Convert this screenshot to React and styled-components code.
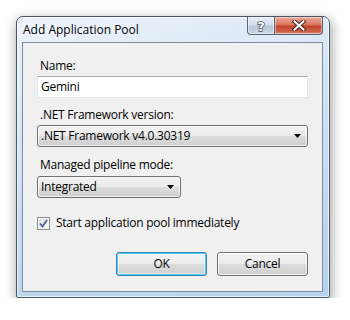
import React from "react";
import styled, { createGlobalStyle } from "styled-components";

const Global = createGlobalStyle`
  html, body { margin: 0; padding: 0; background: #ffffff; }
  body { font-family: "Open Sans", "Noto Sans", sans-serif; font-size: 12px; letter-spacing: -0.25px; color: #000; }
`;

const Page = styled.div`
  padding: 16px 0 0 16px;
`;

const Window = styled.div`
  width: 314px;
  height: 282px;
  box-sizing: border-box;
  border: 1px solid #4a5666;
  border-radius: 7px 7px 2px 2px;
  background: linear-gradient(165deg, #eef4fb 0%, #d6e5f5 35%, #c3d8ef 70%, #b8d1ec 100%);
  box-shadow: 1px 4px 12px 1px rgba(0, 0, 0, 0.35), inset 0 0 0 1px rgba(255, 255, 255, 0.65);
  display: flex;
  flex-direction: column;
  padding: 0 6px 5px 5px;
`;

const TitleBar = styled.div`
  height: 25px;
  display: flex;
  align-items: flex-start;
`;

const Title = styled.div`
  font-size: 12px;
  letter-spacing: 0;
  line-height: 16px;
  margin: 5px 0 0 1px;
  color: #000;
  text-shadow: 0 0 6px rgba(255, 255, 255, 0.9);
`;

const Controls = styled.div`
  margin-left: auto;
  display: flex;
`;

const CapButton = styled.div`
  width: ${(p) => p.$w}px;
  height: 18px;
  box-sizing: border-box;
  border: 1px solid #5a6470;
  border-top: none;
  border-left: ${(p) => (p.$first ? "1px solid #5a6470" : "none")};
  border-radius: ${(p) => (p.$first ? "0 0 0 4px" : "0 0 4px 0")};
  background: ${(p) =>
    p.$close
      ? "linear-gradient(to bottom, #e9a99b 0%, #d9745f 45%, #c2442b 55%, #d06048 85%, #e0937f 100%)"
      : "linear-gradient(to bottom, #e6edf6 0%, #d3dfec 45%, #b9c8da 55%, #c9d6e5 100%)"};
  box-shadow: inset 0 0 0 1px rgba(255, 255, 255, 0.45);
  display: flex;
  align-items: center;
  justify-content: center;
`;

const Client = styled.div`
  flex: 1;
  border: 1px solid #7a8ea6;
  background: #f0f0f0;
  display: flex;
  flex-direction: column;
  padding: 15px 14px 0 14px;
`;

const Label = styled.div`
  line-height: 16px;
  padding-left: 3px;
  margin-top: ${(p) => p.$mt || 0}px;
  margin-bottom: ${(p) => p.$mb || 2}px;
`;

const TextBox = styled.div`
  height: 22px;
  box-sizing: border-box;
  border: 1px solid #dfe6ee;
  border-top-color: #abadb3;
  background: #ffffff;
  padding: 0 3px;
  line-height: 20px;
`;

const Combo = styled.div`
  width: ${(p) => p.$w}px;
  height: 22px;
  box-sizing: border-box;
  border: 1px solid #707070;
  border-radius: 3px;
  background: linear-gradient(to bottom, #f2f2f2 0%, #ebebeb 50%, #dddddd 50%, #cfcfcf 100%);
  box-shadow: inset 0 0 0 1px rgba(255, 255, 255, 0.7);
  display: flex;
  align-items: center;
  padding: 0 6px 0 3px;
  line-height: 20px;
`;

const ComboText = styled.span`
  flex: 1;
`;

const CheckRow = styled.div`
  margin-top: 17px;
  display: flex;
  align-items: center;
  gap: 6px;
  line-height: 16px;
`;

const CheckBox = styled.div`
  width: 13px;
  height: 13px;
  box-sizing: border-box;
  border: 1px solid #8e8f8f;
  background: linear-gradient(135deg, #dcdcdc 0%, #f4f4f4 70%, #ffffff 100%);
  box-shadow: inset 0 0 0 1px #f4f4f4;
  display: flex;
  align-items: center;
  justify-content: center;
`;

const ButtonRow = styled.div`
  margin-top: 21px;
  display: flex;
  justify-content: flex-end;
  gap: 10px;
`;

const Button = styled.div`
  width: 91px;
  height: 24px;
  box-sizing: border-box;
  border: 1px solid ${(p) => (p.$default ? "#3c7fb1" : "#707070")};
  border-radius: 3px;
  background: linear-gradient(to bottom, #f2f2f2 0%, #ebebeb 50%, #dddddd 50%, #cfcfcf 100%);
  box-shadow: ${(p) =>
    p.$default ? "inset 0 0 0 1px #48d0fe, inset 0 0 0 2px rgba(255,255,255,0.4)" : "inset 0 0 0 1px rgba(255,255,255,0.75)"};
  display: flex;
  align-items: center;
  justify-content: center;
  line-height: 16px;
`;

const Arrow = () => (
  <svg width="7" height="4" viewBox="0 0 7 4">
    <path d="M0 0 H7 L3.5 4 Z" fill="#000" />
  </svg>
);

export default function App() {
  return (
    <>
      <Global />
      <Page>
        <Window>
          <TitleBar>
            <Title>Add Application Pool</Title>
            <Controls>
              <CapButton $w={28} $first>
                <svg width="12" height="14" viewBox="0 0 12 14">
                  <text
                    x="6"
                    y="12"
                    textAnchor="middle"
                    fontFamily="DejaVu Sans, sans-serif"
                    fontWeight="bold"
                    fontSize="13"
                    fill="#ffffff"
                    stroke="#3b4654"
                    strokeWidth="1.4"
                    paintOrder="stroke"
                  >
                    ?
                  </text>
                </svg>
              </CapButton>
              <CapButton $w={48} $close>
                <svg width="14" height="11" viewBox="0 0 14 11">
                  <path d="M2.5 1.5 L11.5 9.5 M11.5 1.5 L2.5 9.5" stroke="#3b2a28" strokeWidth="4" strokeLinecap="square" />
                  <path d="M2.5 1.5 L11.5 9.5 M11.5 1.5 L2.5 9.5" stroke="#ffffff" strokeWidth="2" strokeLinecap="square" />
                </svg>
              </CapButton>
            </Controls>
          </TitleBar>
          <Client>
            <Label>Name:</Label>
            <TextBox>Gemini</TextBox>
            <Label $mt={9}>.NET Framework version:</Label>
            <Combo $w={271}>
              <ComboText>.NET Framework v4.0.30319</ComboText>
              <Arrow />
            </Combo>
            <Label $mt={10} $mb={3}>Managed pipeline mode:</Label>
            <Combo $w={144}>
              <ComboText>Integrated</ComboText>
              <Arrow />
            </Combo>
            <CheckRow>
              <CheckBox>
                <svg width="9" height="9" viewBox="0 0 9 9">
                  <path d="M1 4.5 L3.5 7.5 L8 1" fill="none" stroke="#4a5f97" strokeWidth="1.8" />
                </svg>
              </CheckBox>
              <span>Start application pool immediately</span>
            </CheckRow>
            <ButtonRow>
              <Button $default>OK</Button>
              <Button>Cancel</Button>
            </ButtonRow>
          </Client>
        </Window>
      </Page>
    </>
  );
}
